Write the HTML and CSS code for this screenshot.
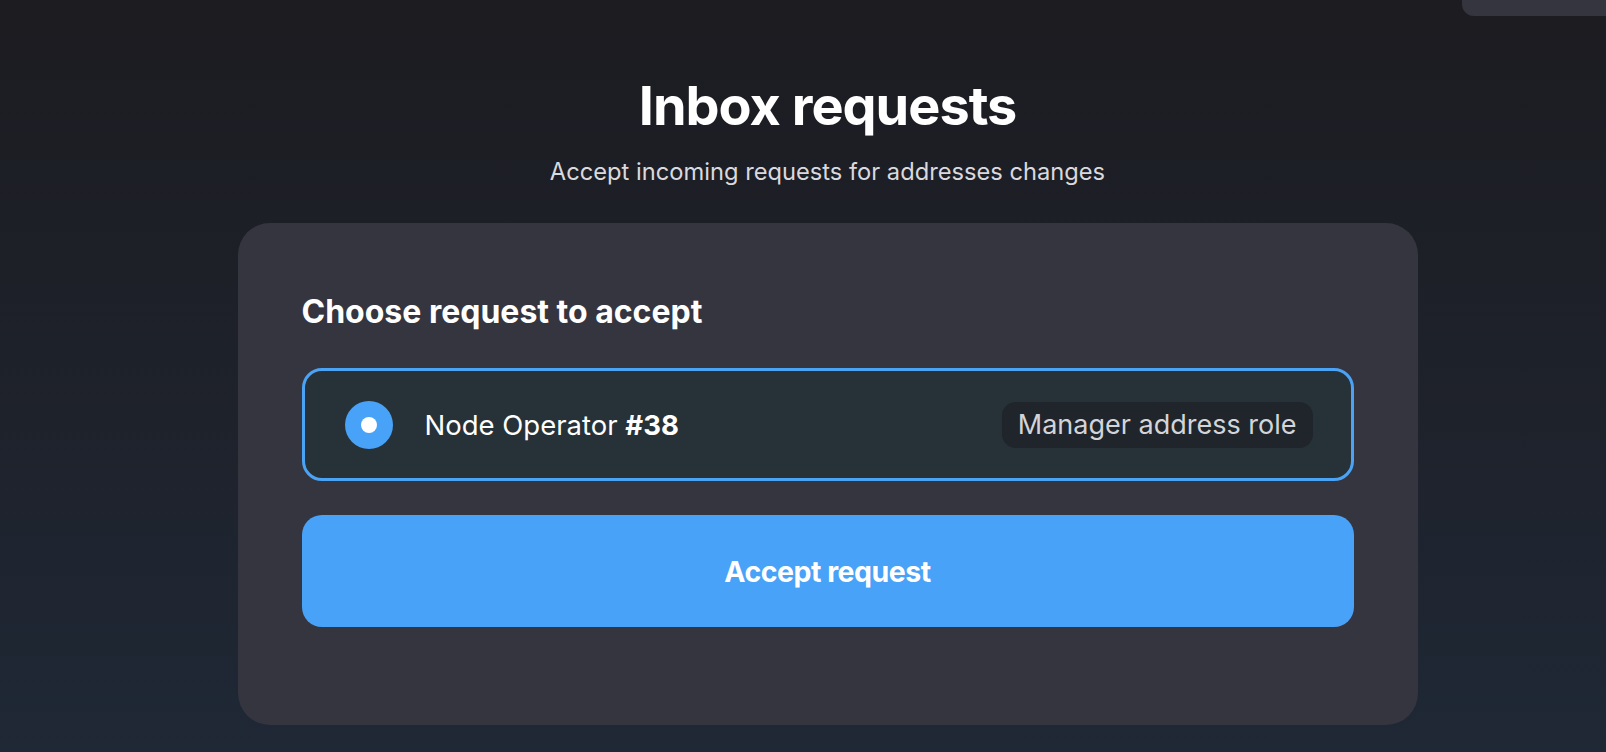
FILE: index.html
```html
<!DOCTYPE html>
<html lang="en">
<head>
<meta charset="utf-8">
<title>Inbox requests</title>
<link rel="stylesheet" href="styles.css">
</head>
<body>
<div class="tab"></div>
<main class="page">
  <h1 class="title">Inbox requests</h1>
  <p class="subtitle">Accept incoming requests for addresses changes</p>
  <section class="card">
    <h2 class="card-title">Choose request to accept</h2>
    <label class="option">
      <span class="radio"><span class="radio-dot"></span></span>
      <span class="option-name">Node Operator <b>#38</b></span>
      <span class="badge">Manager address role</span>
    </label>
    <button class="btn">Accept request</button>
  </section>
</main>
</body>
</html>
```
FILE: styles.css
```css
* { box-sizing: border-box; }
html, body { margin: 0; height: 100%; }
body {
  background: linear-gradient(180deg, #1c1c21 0%, #1e222b 55%, #1f2836 100%);
  font-family: Inter, "Noto Sans", sans-serif;
  color: #fff;
  overflow: hidden;
  position: relative;
}
.tab {
  position: absolute;
  top: 0;
  right: 0;
  width: 144px;
  height: 16px;
  background: #35353f;
  border-bottom-left-radius: 12px;
}
.page {
  display: flex;
  flex-direction: column;
  align-items: center;
  padding-left: 49px;
  padding-top: 74px;
}
.title {
  margin: 0;
  font-size: 54px;
  line-height: 64px;
  font-weight: 700;
  letter-spacing: -1px;
}
.subtitle {
  margin: 18px 0 0;
  font-size: 23.7px;
  line-height: 32px;
  color: #d9d9de;
}
.card {
  margin-top: 35px;
  width: 1180px;
  background: #35353f;
  border-radius: 32px;
  padding: 69px 64px 98px;
}
.card-title {
  margin: 0;
  font-size: 32px;
  line-height: 40px;
  font-weight: 700;
}
.option {
  margin-top: 36px;
  display: flex;
  align-items: center;
  height: 113px;
  border: 3px solid #4aa3f5;
  border-radius: 20px;
  background: #263238;
  padding: 0 38px 0 40px;
}
.radio {
  width: 48px;
  height: 48px;
  border-radius: 50%;
  background: #48a2f8;
  display: flex;
  align-items: center;
  justify-content: center;
  flex: none;
}
.radio-dot {
  width: 16px;
  height: 16px;
  border-radius: 50%;
  background: #fff;
}
.option-name {
  margin-left: 32px;
  font-size: 27.5px;
  flex: 1;
}
.option-name b { font-weight: 700; }
.badge {
  background: #1f252b;
  border-radius: 14px;
  height: 46px;
  padding: 0 16px;
  display: flex;
  align-items: center;
  font-size: 27px;
  color: #d4d4d8;
}
.btn {
  margin-top: 34px;
  width: 100%;
  height: 112px;
  border: 0;
  border-radius: 20px;
  background: #48a2f8;
  color: #fff;
  font-family: inherit;
  font-size: 28.5px;
  font-weight: 700;
  letter-spacing: -0.5px;
}
```
